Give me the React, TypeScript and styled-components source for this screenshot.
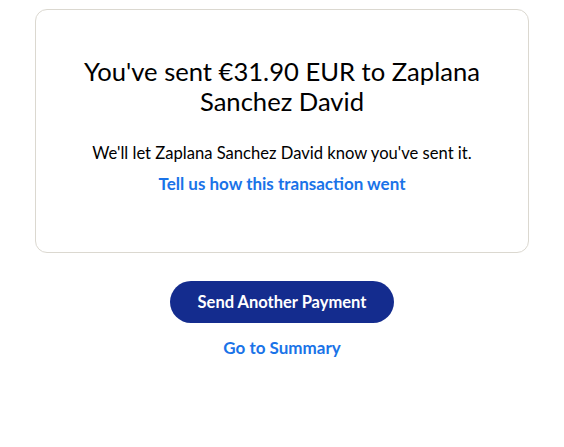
import styled, { createGlobalStyle } from 'styled-components'

const GlobalStyle = createGlobalStyle`
    body {
        margin: 0;
        background: #ffffff;
        font-family: "Lato", "Noto Sans", sans-serif;
        color: #000000;
    }
`

const Page = styled.main`
    padding: 9px 35px 0;
    display: flex;
    flex-direction: column;
    align-items: center;
`

const Card = styled.section`
    width: 100%;
    box-sizing: border-box;
    border: 1px solid #dbd8d0;
    border-radius: 12px;
    padding: 46px 30px 57px;
    display: flex;
    flex-direction: column;
    align-items: center;
    text-align: center;
`

const Title = styled.h1`
    margin: 0 0 26px;
    font-size: 25.6px;
    font-weight: 400;
    line-height: 30px;
    max-width: 410px;
`

const Text = styled.p`
    margin: 0 0 9px;
    font-size: 16.6px;
    line-height: 22px;
`

const Link = styled.a`
    color: #1a73e8;
    font-weight: 700;
    font-size: 17px;
    line-height: 22px;
    text-decoration: none;
    cursor: pointer;
`

const Actions = styled.div`
    margin-top: 28px;
    display: flex;
    flex-direction: column;
    align-items: center;
    gap: 14px;
`

const Button = styled.button`
    background: #142c8e;
    color: #ffffff;
    border: none;
    border-radius: 21px;
    height: 42px;
    padding: 0 28px;
    font-family: inherit;
    font-size: 16.5px;
    font-weight: 700;
    cursor: pointer;
`

export default function App() {
    return (
        <>
            <GlobalStyle />
            <Page>
                <Card>
                    <Title>You've sent €31.90 EUR to Zaplana Sanchez David</Title>
                    <Text>We'll let Zaplana Sanchez David know you've sent it.</Text>
                    <Link>Tell us how this transaction went</Link>
                </Card>
                <Actions>
                    <Button>Send Another Payment</Button>
                    <Link>Go to Summary</Link>
                </Actions>
            </Page>
        </>
    )
}
